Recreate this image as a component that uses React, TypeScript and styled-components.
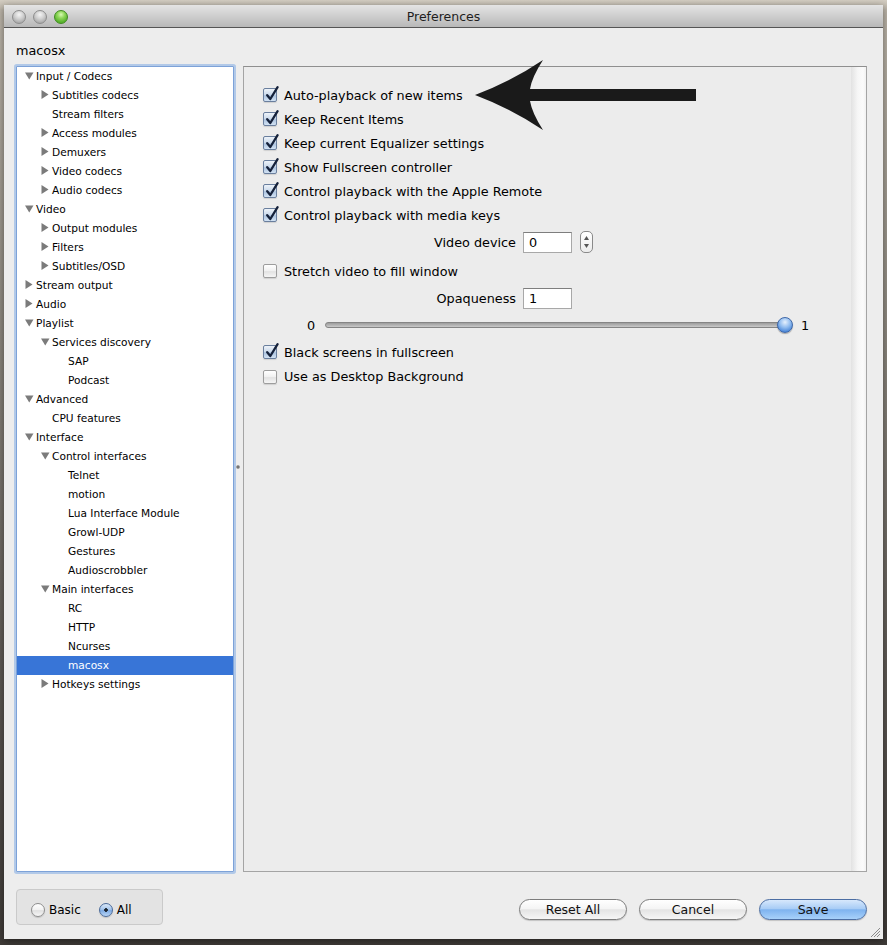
import React from "react";
import styled, { createGlobalStyle } from "styled-components";

const GlobalStyle = createGlobalStyle`
  html, body { margin: 0; padding: 0; }
  body {
    width: 887px;
    height: 945px;
    overflow: hidden;
    background: linear-gradient(to bottom, #d4cec3 0px, #bdb6aa 10px, #8e8980 35%, #5f5a55 70%, #3f3b38 100%);
    font-family: "DejaVu Sans", "Lucida Grande", sans-serif;
    color: #000;
  }
`;

const Desk = styled.div`
  width: 887px;
  height: 945px;
  box-sizing: border-box;
  padding: 5px 4px 6px 4px;
`;

const Window = styled.div`
  position: relative;
  width: 879px;
  height: 934px;
  display: flex;
  flex-direction: column;
  background: #ededed;
  box-shadow: 0 2px 8px rgba(0, 0, 0, 0.45);
`;

const TitleBar = styled.div`
  height: 23px;
  box-sizing: border-box;
  border-bottom: 1px solid #555;
  background: linear-gradient(to bottom, #e4e4e4, #b8b8b8);
  display: flex;
  align-items: center;
  position: relative;
`;

const Lights = styled.div`
  display: flex;
  gap: 7px;
  padding-left: 8px;
  padding-top: 1px;
`;

const Light = styled.span<{ $green?: boolean }>`
  width: 14px;
  height: 14px;
  border-radius: 50%;
  box-sizing: border-box;
  border: 1px solid ${(p) => (p.$green ? "#3f8a20" : "#8d8d8d")};
  background: ${(p) =>
    p.$green
      ? "radial-gradient(circle at 50% 30%, #d9f9b4 0, #8fd75a 35%, #55b02a 75%, #7fd34a 100%)"
      : "radial-gradient(circle at 50% 30%, #f4f4f4 0, #d2d2d2 40%, #a9a9a9 80%, #c8c8c8 100%)"};
`;

const Title = styled.div`
  position: absolute;
  left: 0;
  right: 0;
  text-align: center;
  font-size: 12.5px;
  color: #1e1e1e;
  pointer-events: none;
`;

const Body = styled.div`
  flex: 1;
  display: flex;
  flex-direction: column;
  padding: 0 16px 0 12px;
`;

const Heading = styled.div`
  height: 38px;
  box-sizing: border-box;
  padding: 15px 0 0 0;
  line-height: 16px;
  font-size: 12.8px;
`;

const MainRow = styled.div`
  height: 806px;
  display: flex;
`;

const Tree = styled.div`
  width: 218px;
  box-sizing: border-box;
  border: 1px solid #7da2d8;
  box-shadow: 0 0 0 2px rgba(138, 176, 228, 0.6);
  border-radius: 1px;
  background: #fff;
  display: flex;
  flex-direction: column;
`;

const TreeRow = styled.div<{ $level: number; $selected?: boolean }>`
  height: 19px;
  box-sizing: border-box;
  padding-bottom: 2px;
  display: flex;
  align-items: center;
  padding-left: ${(p) => 8 + p.$level * 16}px;
  font-size: 10.6px;
  background: ${(p) => (p.$selected ? "#3875d7" : "transparent")};
  color: ${(p) => (p.$selected ? "#fff" : "#000")};
  white-space: nowrap;
`;

const Disclosure = styled.span`
  width: 11px;
  height: 17px;
  display: flex;
  align-items: center;
  justify-content: flex-start;
  flex: none;
`;

const Splitter = styled.div`
  width: 9px;
  display: flex;
  align-items: center;
  justify-content: center;
`;

const Dimple = styled.span`
  width: 4px;
  height: 4px;
  margin-top: -4px;
  margin-left: -1px;
  border-radius: 50%;
  background: radial-gradient(circle, #5a5a5a 0, #9a9a9a 60%, transparent 100%);
`;

const Panel = styled.div`
  position: relative;
  width: 624px;
  box-sizing: border-box;
  border: 1px solid #a4a4a4;
  border-top-color: #8f8f8f;
  background: #ececec;
  display: flex;
`;

const PanelContent = styled.div`
  flex: 1;
  padding: 16px 0 0 19px;
  display: flex;
  flex-direction: column;
`;

const Gutter = styled.div`
  width: 15px;
  background: linear-gradient(to right, #e2e2e2, #f6f6f6 45%, #fbfbfb 80%, #f1f1f1);
`;

const Row = styled.div<{ $h: number }>`
  height: ${(p) => p.$h}px;
  display: flex;
  align-items: center;
  font-size: 12.8px;
  white-space: nowrap;
`;

const Box = styled.span<{ $checked?: boolean }>`
  position: relative;
  width: 14px;
  height: 14px;
  box-sizing: border-box;
  margin-right: 7px;
  border-radius: 2px;
  border: 1px solid ${(p) => (p.$checked ? "#6a7f9e" : "#9d9d9d")};
  background: ${(p) =>
    p.$checked
      ? "linear-gradient(to bottom, #eef3f9 0, #c9d8ea 50%, #adc4e0 55%, #d2e2f3 100%)"
      : "linear-gradient(to bottom, #ffffff 0, #f0f0f0 50%, #e2e2e2 55%, #f5f5f5 100%)"};
  box-shadow: 0 1px 1px rgba(0, 0, 0, 0.12);
  flex: none;
`;

const Tick = styled.svg`
  position: absolute;
  left: 1px;
  top: -3px;
  overflow: visible;
`;

const FieldLabel = styled.span`
  width: 253px;
  text-align: right;
  margin-right: 7px;
`;

const Field = styled.span`
  width: 49px;
  height: 21px;
  box-sizing: border-box;
  border: 1px solid #a8a8a8;
  border-top-color: #7e7e7e;
  background: #fff;
  padding-left: 5px;
  line-height: 19px;
`;

const Stepper = styled.span`
  width: 13px;
  height: 22px;
  margin-left: 8px;
  box-sizing: border-box;
  border: 1px solid #8a8a8a;
  border-radius: 5px;
  background: linear-gradient(to bottom, #ffffff, #ececec);
  display: flex;
  flex-direction: column;
  align-items: center;
  justify-content: space-around;
  padding: 2px 0;
`;

const Spacer = styled.span<{ $w: number }>`
  width: ${(p) => p.$w}px;
  flex: none;
`;

const SliderEnd = styled.span`
  width: 12px;
  text-align: center;
`;

const SliderTrack = styled.div`
  position: relative;
  width: 468px;
  height: 16px;
  margin: 0 8px;
  display: flex;
  align-items: center;
`;

const Groove = styled.div`
  flex: 1;
  height: 6px;
  margin-right: 4px;
  border-radius: 3px;
  box-sizing: border-box;
  border: 1px solid #858585;
  background: linear-gradient(to bottom, #9c9c9c, #c9c9c9);
`;

const Knob = styled.span`
  position: absolute;
  right: 0;
  top: 0;
  width: 16px;
  height: 16px;
  box-sizing: border-box;
  border-radius: 50%;
  border: 1px solid #3f68a8;
  background: radial-gradient(circle at 50% 30%, #e6f1fd 0, #8fbbef 45%, #4b87d8 80%, #7db1ee 100%);
  box-shadow: 0 1px 1px rgba(0, 0, 0, 0.3);
`;

const Arrow = styled.svg`
  position: absolute;
  left: 226px;
  top: -12px;
  overflow: visible;
`;

const Footer = styled.div`
  flex: 1;
  display: flex;
  align-items: flex-start;
`;

const RadioGroup = styled.div`
  margin-top: 17px;
  width: 147px;
  height: 36px;
  box-sizing: border-box;
  border: 1px solid #cacaca;
  border-radius: 4px;
  background: #e3e3e3;
  display: flex;
  align-items: center;
  padding: 6px 0 0 14px;
  font-size: 12px;
`;

const Radio = styled.span<{ $on?: boolean }>`
  width: 14px;
  height: 14px;
  box-sizing: border-box;
  border-radius: 50%;
  margin-right: 4px;
  border: 1px solid ${(p) => (p.$on ? "#4a6a9a" : "#8e8e8e")};
  background: ${(p) =>
    p.$on
      ? "radial-gradient(circle, #1c2530 0, #1c2530 18%, transparent 24%), linear-gradient(to bottom, #dce9f8 0, #9dc0ea 50%, #7eaae2 55%, #b9d6f6 100%)"
      : "linear-gradient(to bottom, #ffffff 0, #f1f1f1 50%, #e0e0e0 55%, #f7f7f7 100%)"};
  box-shadow: 0 1px 1px rgba(0, 0, 0, 0.15);
  flex: none;
`;

const RadioText = styled.span<{ $gap?: number }>`
  margin-right: ${(p) => p.$gap ?? 0}px;
`;

const Buttons = styled.div`
  margin-left: auto;
  margin-top: 27px;
  display: flex;
  gap: 12px;
`;

const PushButton = styled.span<{ $primary?: boolean }>`
  width: 108px;
  height: 21px;
  box-sizing: border-box;
  border-radius: 11px;
  border: 1px solid ${(p) => (p.$primary ? "#4c6ea3" : "#7c7c7c")};
  background: ${(p) =>
    p.$primary
      ? "linear-gradient(to bottom, #d7e8fc 0, #a9cdf6 45%, #7fb3ef 52%, #a8d1fa 100%)"
      : "linear-gradient(to bottom, #ffffff 0, #f5f5f5 45%, #e4e4e4 52%, #f6f6f6 100%)"};
  box-shadow: 0 1px 1px rgba(0, 0, 0, 0.18);
  display: flex;
  align-items: center;
  justify-content: center;
  font-size: 12.5px;
  color: #111;
`;

const Grip = styled.svg`
  position: absolute;
  right: 3px;
  bottom: 2px;
`;

type Node = { label: string; level: number; kind: "open" | "closed" | "leaf"; selected?: boolean };

const tree: Node[] = [
  { label: "Input / Codecs", level: 0, kind: "open" },
  { label: "Subtitles codecs", level: 1, kind: "closed" },
  { label: "Stream filters", level: 1, kind: "leaf" },
  { label: "Access modules", level: 1, kind: "closed" },
  { label: "Demuxers", level: 1, kind: "closed" },
  { label: "Video codecs", level: 1, kind: "closed" },
  { label: "Audio codecs", level: 1, kind: "closed" },
  { label: "Video", level: 0, kind: "open" },
  { label: "Output modules", level: 1, kind: "closed" },
  { label: "Filters", level: 1, kind: "closed" },
  { label: "Subtitles/OSD", level: 1, kind: "closed" },
  { label: "Stream output", level: 0, kind: "closed" },
  { label: "Audio", level: 0, kind: "closed" },
  { label: "Playlist", level: 0, kind: "open" },
  { label: "Services discovery", level: 1, kind: "open" },
  { label: "SAP", level: 2, kind: "leaf" },
  { label: "Podcast", level: 2, kind: "leaf" },
  { label: "Advanced", level: 0, kind: "open" },
  { label: "CPU features", level: 1, kind: "leaf" },
  { label: "Interface", level: 0, kind: "open" },
  { label: "Control interfaces", level: 1, kind: "open" },
  { label: "Telnet", level: 2, kind: "leaf" },
  { label: "motion", level: 2, kind: "leaf" },
  { label: "Lua Interface Module", level: 2, kind: "leaf" },
  { label: "Growl-UDP", level: 2, kind: "leaf" },
  { label: "Gestures", level: 2, kind: "leaf" },
  { label: "Audioscrobbler", level: 2, kind: "leaf" },
  { label: "Main interfaces", level: 1, kind: "open" },
  { label: "RC", level: 2, kind: "leaf" },
  { label: "HTTP", level: 2, kind: "leaf" },
  { label: "Ncurses", level: 2, kind: "leaf" },
  { label: "macosx", level: 2, kind: "leaf", selected: true },
  { label: "Hotkeys settings", level: 1, kind: "closed" },
];

function Triangle({ kind }: { kind: Node["kind"] }) {
  if (kind === "leaf") return <Disclosure />;
  return (
    <Disclosure>
      {kind === "open" ? (
        <svg width="9" height="8" viewBox="0 0 9 8">
          <polygon points="0,0.5 8.5,0.5 4.25,7.5" fill="#7b7b7b" />
        </svg>
      ) : (
        <svg width="8" height="9" viewBox="0 0 8 9">
          <polygon points="0.5,0 7.5,4.5 0.5,9" fill="#7b7b7b" />
        </svg>
      )}
    </Disclosure>
  );
}

function Check({ checked, label }: { checked?: boolean; label: string }) {
  return (
    <>
      <Box $checked={checked}>
        {checked && (
          <Tick width="14" height="16" viewBox="0 0 14 16">
            <path d="M2.2 9.2 L5.3 13 L12.6 1.2" fill="none" stroke="#15213a" strokeWidth="2.3" strokeLinecap="round" strokeLinejoin="round" />
          </Tick>
        )}
      </Box>
      <span>{label}</span>
    </>
  );
}

export default function App() {
  return (
    <Desk>
      <GlobalStyle />
      <Window>
        <TitleBar>
          <Lights>
            <Light />
            <Light />
            <Light $green />
          </Lights>
          <Title>Preferences</Title>
        </TitleBar>
        <Body>
          <Heading>macosx</Heading>
          <MainRow>
            <Tree>
              {tree.map((n) => (
                <TreeRow key={n.label} $level={n.level} $selected={n.selected}>
                  <Triangle kind={n.kind} />
                  {n.label}
                </TreeRow>
              ))}
            </Tree>
            <Splitter>
              <Dimple />
            </Splitter>
            <Panel>
              <PanelContent>
                <Row $h={24}><Check checked label="Auto-playback of new items" /></Row>
                <Row $h={24}><Check checked label="Keep Recent Items" /></Row>
                <Row $h={24}><Check checked label="Keep current Equalizer settings" /></Row>
                <Row $h={24}><Check checked label="Show Fullscreen controller" /></Row>
                <Row $h={24}><Check checked label="Control playback with the Apple Remote" /></Row>
                <Row $h={24}><Check checked label="Control playback with media keys" /></Row>
                <Row $h={30}>
                  <FieldLabel>Video device</FieldLabel>
                  <Field>0</Field>
                  <Stepper>
                    <svg width="5" height="4" viewBox="0 0 5 4"><polygon points="2.5,0 5,4 0,4" fill="#555" /></svg>
                    <svg width="5" height="4" viewBox="0 0 5 4"><polygon points="0,0 5,0 2.5,4" fill="#555" /></svg>
                  </Stepper>
                </Row>
                <Row $h={28}><Check label="Stretch video to fill window" /></Row>
                <Row $h={26}>
                  <FieldLabel>Opaqueness</FieldLabel>
                  <Field>1</Field>
                </Row>
                <Row $h={28}>
                  <Spacer $w={42} />
                  <SliderEnd>0</SliderEnd>
                  <SliderTrack>
                    <Groove />
                    <Knob />
                  </SliderTrack>
                  <span>1</span>
                </Row>
                <Row $h={26}><Check checked label="Black screens in fullscreen" /></Row>
                <Row $h={23}><Check label="Use as Desktop Background" /></Row>
              </PanelContent>
              <Gutter />
              <Arrow width="232" height="82" viewBox="0 0 232 82">
                <path
                  d="M5 40 Q42 26 73 5 Q62 22 60 34 L226 34 L226 46 L60 46 Q62 58 73 75 Q42 54 5 40 Z"
                  fill="#1a1a1a"
                />
              </Arrow>
            </Panel>
          </MainRow>
          <Footer>
            <RadioGroup>
              <Radio />
              <RadioText $gap={18}>Basic</RadioText>
              <Radio $on />
              <RadioText>All</RadioText>
            </RadioGroup>
            <Buttons>
              <PushButton>Reset All</PushButton>
              <PushButton>Cancel</PushButton>
              <PushButton $primary>Save</PushButton>
            </Buttons>
          </Footer>
        </Body>
        <Grip width="10" height="10" viewBox="0 0 10 10">
          <path d="M1 10 L10 1 M4 10 L10 4 M7 10 L10 7" stroke="#8a8a8a" strokeWidth="1" />
        </Grip>
      </Window>
    </Desk>
  );
}
